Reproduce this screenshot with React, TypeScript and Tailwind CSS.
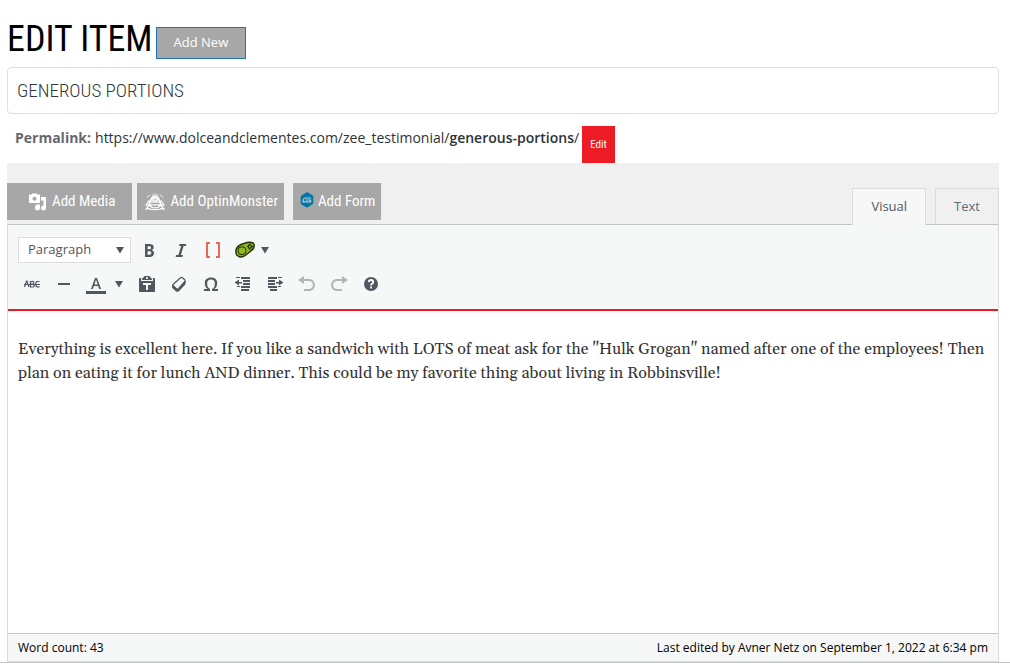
import React, { useState } from 'react';

const condensed = 'font-["Roboto_Condensed","Liberation_Sans_Narrow",Roboto,sans-serif]';

interface ToolButtonProps {
  label: string;
  className?: string;
  children: React.ReactNode;
}

const ToolButton: React.FC<ToolButtonProps> = ({ label, className = 'w-8', children }) => (
  <button
    type="button"
    aria-label={label}
    title={label}
    className={`flex h-8 items-center justify-center text-[#50575e] ${className}`}
  >
    {children}
  </button>
);

const Caret = () => (
  <svg className="h-2 w-2" viewBox="0 0 8 8" fill="currentColor">
    <path d="M0 1h8L4 7.500z" />
  </svg>
);

const MediaIcon = () => (
  <svg className="h-5 w-5" viewBox="0 0 20 20" fill="currentColor">
    <path d="M12 9.500V3.500c0-.55-.45-1-1-1H9.500L8.500 1.500h-4l-1 1H2c-.55 0-1 .45-1 1v6.500c0 .55.45 1 1 1h9c.55 0 1-.45 1-1zM6.500 4.800c1.100 0 2 .9 2 2s-.9 2-2 2-2-.9-2-2 .9-2 2-2zM13 5h5v11c0 1.400-1.100 2.500-2.500 2.500S13 17.400 13 16s1-2.500 2.500-2.500V8.500H13V5zM8.500 12.500H12V16c0 1.400-1.100 2.500-2.500 2.500S7 17.400 7 16s.5-3.500 1.500-3.500z" />
  </svg>
);

const MonsterIcon = () => (
  <svg className="h-5 w-5" viewBox="0 0 20 20" fill="none" stroke="currentColor" strokeWidth="1">
    <path d="M7 4Q7.500 1.800 10 1.800T13 4M2 6q0-2.500 3.500-3M18 6q0-2.500-3.500-3" strokeOpacity=".6" />
    <path d="M4 13Q6 4 10 4t6 9z" fill="currentColor" fillOpacity=".65" strokeWidth="1.600" />
    <path d="M4 8.500 1 13l3 .5L1 17l4-.5M16 8.500l3 4.500-3 .5 3 3.500-4-.5M4 17q6 1.500 12 0" strokeWidth="1.200" />
    <path d="M4.500 12.500h11V14q-2 2-5.500 2t-5.500-2z" fill="currentColor" fillOpacity=".6" />
    <path d="M5.500 11.800h9M7 14.200h6" stroke="#8f8f8f" />
    <circle cx="10" cy="7.800" r="1.800" fill="white" />
    <circle cx="10" cy="7.800" r=".8" fill="#8a8a8a" stroke="none" />
  </svg>
);

const FormIcon = () => (
  <svg className="mb-1 h-4 w-4" viewBox="0 0 16 16">
    <path d="M7 .5q1-.6 2 0l4.500 2.700q.8.500.8 1.500v6q0 1-.8 1.500L9 15.300q-1 .6-2 0l-4.500-2.900q-.8-.5-.8-1.500v-6q0-1 .8-1.500z" fill="#0077a8" />
    <path d="M12 6H6.200Q4.800 6 4.500 7.500L4 9.800h7.600V8H6.500" fill="none" stroke="#b9c9d0" strokeWidth="1.200" />
  </svg>
);

const BoldIcon = () => (
  <svg className="h-5 w-5" viewBox="0 0 20 20" fill="currentColor">
    <path d="M6 4v13h4.540c1.370 0 2.460-.33 3.260-1 .8-.66 1.200-1.580 1.200-2.770 0-.84-.17-1.510-.51-2.010s-.9-.85-1.670-1.030v-.09c.57-.1 1.020-.4 1.360-.9s.51-1.130.51-1.910c0-1.140-.39-1.980-1.170-2.500C12.750 4.260 11.500 4 9.780 4H6zm2.570 5.150V6.260h1.360c.73 0 1.270.11 1.610.32.34.22.51.58.51 1.070 0 .54-.16.92-.47 1.150s-.82.35-1.510.35h-1.500zm0 2.190h1.600c1.440 0 2.160.53 2.160 1.610 0 .6-.17 1.050-.51 1.340s-.86.43-1.570.43H8.570v-3.380z" />
  </svg>
);

const ItalicIcon = () => (
  <svg className="h-5 w-5" viewBox="0 0 20 20" fill="currentColor">
    <path d="M14.780 6h-2.130l-2.800 9h2.120l-.62 2H4.600l.62-2h2.140l2.800-9H8.030l.62-2h6.750z" />
  </svg>
);

const BracketsIcon = () => (
  <svg className="h-5 w-5" viewBox="0 0 20 20" fill="none" stroke="#e8685c" strokeWidth="2">
    <path d="M7 3H4v14h3M13 3h3v14h-3" />
  </svg>
);

const GreenIcon = () => (
  <svg className="h-5 w-5" viewBox="0 0 20 20">
    <path d="M.8 11.500Q.8 7 6 4.500l6-2q6.500-1 7.200 2.300.3 3.500-3 6l-6 4.700q-3 2-6 1.200Q.8 15.700.8 11.500z" fill="#8fb51b" stroke="#203008" strokeWidth="1.400" />
    <circle cx="7" cy="10.700" r="4" fill="#91b91c" stroke="#203008" strokeWidth="1" />
    <circle cx="14.800" cy="6.500" r="1.600" fill="#b5d45a" stroke="#203008" strokeWidth="1.300" />
    <path d="M14.800 3.500v2M14.800 8v2M12 6.500h2M16 6.500h2" stroke="#203008" strokeWidth="1" />
  </svg>
);

const StrikeIcon = () => (
  <svg className="h-5 w-5" viewBox="0 0 20 20" fill="none" stroke="currentColor" strokeWidth="1.200">
    <path d="M2.500 13l2-6h.5l2 6M8.500 7v6h2q1.700 0 1.700-1.600T10.500 10H8.500h1.800q1.500 0 1.500-1.500T10.300 7.500H8.500M17.500 7.500h-2q-1.700 0-1.700 2.700t1.700 2.700h2M2 10.500h16" />
  </svg>
);

const ColorIcon = () => (
  <svg className="h-5 w-5" viewBox="0 0 20 20" fill="currentColor">
    <path d="M13.230 15h1.900L11 4H9L5 15h1.880l1.070-3h4.180zm-1.530-4.540H8.510L10 5.600z" />
    <path d="M0 17h20v3H0z" />
  </svg>
);

const PasteIcon = () => (
  <svg className="h-5 w-5" viewBox="0 0 20 20" fill="currentColor">
    <path d="M12.380 2 15 5v1H5V5l2.640-3h4.740zM10 5c.55 0 1-.44 1-1 0-.55-.45-1-1-1s-1 .45-1 1c0 .56.45 1 1 1zm5.450-1H17c.55 0 1 .45 1 1v12c0 .56-.45 1-1 1H3c-.55 0-1-.44-1-1V5c0-.55.45-1 1-1h1.550L4 4.630V7h12V4.630zM14 11V9H6v2h3v5h2v-5h3z" />
  </svg>
);

const EraserIcon = () => (
  <svg className="h-5 w-5" viewBox="0 0 20 20" fill="none" stroke="currentColor" strokeWidth="1.200" strokeLinejoin="round">
    <path d="M11.500 3.800q1-1 2 0l2.200 2q1 1 0 2L9.500 15q-1 1-2 0l-3.200-2.800q-1-1 0-2z" />
    <path d="M3.700 11.500v2L7.500 17q1 .6 2-.2l6.500-7V7.500L9.500 15q-1 1-2 0z" fill="currentColor" />
  </svg>
);

const OmegaIcon = () => (
  <svg className="h-5 w-5" viewBox="0 0 20 20" fill="currentColor">
    <path d="M10 5.400c1.270 0 2.240.36 2.910 1.080.66.710 1 1.760 1 3.130 0 1.280-.23 2.370-.69 3.270-.47.890-1.270 1.520-2.220 2.120v2h6v-2h-3.690c.92-.64 1.620-1.340 2.120-2.340.49-1.010.74-2.130.74-3.350 0-1.780-.55-3.190-1.650-4.220S11.920 3.540 10 3.540s-3.430.53-4.520 1.570c-1.100 1.040-1.650 2.440-1.650 4.200 0 1.210.24 2.310.73 3.330.48 1.010 1.190 1.710 2.100 2.360H3v2h6v-2c-.98-.64-1.800-1.280-2.240-2.170-.45-.890-.67-1.960-.67-3.220 0-1.370.33-2.410 1-3.130C7.750 5.760 8.720 5.400 10 5.400z" />
  </svg>
);

const OutdentIcon = () => (
  <svg className="h-5 w-5" viewBox="0 0 20 20" fill="currentColor">
    <path d="M7 4V3H3v1h4zM17 5H8V3h9v2zm0 3h-7V6h7v2zM9 8H6V5.500L1.500 8.500l4.500 3V9.500h3zM17 11h-7V9h7v2zm0 3H8v-2h9v2zM7 13v-1H4v1h3zm9 4H8v-2h8v2z" />
  </svg>
);

const IndentIcon = () => (
  <svg className="h-5 w-5" viewBox="0 0 20 20" fill="currentColor">
    <path d="M3 5V3h9v2H3zm10-1V3h4v1h-4zM10 8H3V6h7v2zm8.500.5-4.500 3V9.500h-3V8h3V5.500zM10 11H3V9h7v2zm2 3H3v-2h9v2zm4-1h-3v-1h3v1zm-4 4H5v-2h7v2z" />
  </svg>
);

const UndoIcon = () => (
  <svg className="h-5 w-5" viewBox="0 0 20 20" fill="currentColor">
    <path d="M12 5H7V2L1 6l6 4V7h5c2.200 0 4 1.800 4 4s-1.800 4-4 4H7v2h5c3.300 0 6-2.700 6-6s-2.700-6-6-6z" />
  </svg>
);

const RedoIcon = () => (
  <svg className="h-5 w-5" viewBox="0 0 20 20" fill="currentColor">
    <path d="M8 5h5V2l6 4-6 4V7H8c-2.200 0-4 1.800-4 4s1.800 4 4 4h5v2H8c-3.300 0-6-2.700-6-6s2.700-6 6-6z" />
  </svg>
);

const HelpIcon = () => (
  <svg className="h-5 w-5" viewBox="0 0 20 20" fill="currentColor">
    <circle cx="10" cy="10" r="7" />
    <path d="M7.700 8.200Q7.900 6 10 6t2.200 1.900Q12.200 9 11 9.700q-1 .6-1 1.700M10 12.500v2" fill="none" stroke="white" strokeWidth="1.800" />
  </svg>
);

export default function App() {
  const [title, setTitle] = useState('GENEROUS PORTIONS');
  const [tab, setTab] = useState<'visual' | 'text'>('visual');
  const [content, setContent] = useState(
    'Everything is excellent here. If you like a sandwich with LOTS of meat ask for the "Hulk Grogan" named after one of the employees! Then plan on eating it for lunch AND dinner. This could be my favorite thing about living in Robbinsville!'
  );

  const mediaButton = `flex h-[37px] items-center bg-[#a7a7a7] text-[15px] text-white ${condensed}`;

  return (
    <div className='flex min-h-screen flex-col bg-white pb-[2px] font-["Open_Sans",sans-serif] text-[13px]'>
      <main className="flex flex-1 flex-col border-b border-[#c3c4c7] pr-[11px] pl-[7px]">
        <header className="flex h-[67px] items-end gap-[3px] pb-2">
          <h1 className={`text-4xl leading-[40px] text-black ${condensed}`}>EDIT ITEM</h1>
          <a
            href="#new"
            className="flex h-8 items-center border border-[#2271b1] bg-[#a7a7a7] px-[17px] text-white"
          >
            Add New
          </a>
        </header>

        <input
          type="text"
          aria-label="Title"
          value={title}
          onChange={(e) => setTitle(e.target.value)}
          className={`h-[47px] w-full rounded border border-[#dfdfdf] px-[9px] text-[19px] font-light text-[#32373c] ${condensed}`}
        />

        <div className="flex h-[49px] items-end gap-[3px] pl-2 text-sm text-[#2c3338]">
          <p className="flex h-[37px] gap-1 leading-6">
            <strong className="text-[#646970]">Permalink:</strong>
            <a href="#permalink">
              https://www.dolceandclementes.com/zee_testimonial/<span className="font-semibold">generous-portions</span>/
            </a>
          </p>
          <button type="button" className={`h-[37px] bg-[#ee1c25] px-2 text-[11px] text-white ${condensed}`}>
            Edit
          </button>
        </div>

        <div className="flex h-[61px] items-end justify-between bg-[#f0f0f1]">
          <div className="flex pb-1">
            <button type="button" className={`${mediaButton} mr-[5px] gap-1 pr-[17px] pl-[21px]`}>
              <MediaIcon />
              Add Media
            </button>
            <button type="button" className={`${mediaButton} mr-[9px] gap-[5px] pr-[6px] pl-2`}>
              <MonsterIcon />
              Add OptinMonster
            </button>
            <button type="button" className={`${mediaButton} gap-[3px] px-[6px]`}>
              <FormIcon />
              Add Form
            </button>
          </div>
          <div className="flex gap-[9px]" role="tablist">
            <button
              type="button"
              role="tab"
              aria-selected={tab === 'visual'}
              onClick={() => setTab('visual')}
              className={`relative -mb-px h-[37px] border border-b-0 border-[#dcdcde] px-[18px] text-[#50575e] ${tab === 'visual' ? 'bg-[#f6f7f7]' : 'bg-[#f0f0f1]'}`}
            >
              Visual
            </button>
            <button
              type="button"
              role="tab"
              aria-selected={tab === 'text'}
              onClick={() => setTab('text')}
              className={`h-9 border border-b-0 border-[#dcdcde] px-[18px] text-[#646970] ${tab === 'text' ? 'bg-[#f6f7f7]' : 'bg-[#f0f0f1]'}`}
            >
              Text
            </button>
          </div>
        </div>

        <section className="flex flex-1 flex-col border border-[#dcdcde] border-t-[#c3c4c7]">
          <div className="border-b-2 border-[#ee1c25] bg-[#f6f7f7] px-2 py-2" role="toolbar">
            <div className="flex h-[34px] items-center">
              <div className="relative mx-[2px] w-[113px] text-[#50575e]">
                <select
                  aria-label="Format"
                  className="block h-[26px] w-full appearance-none border border-[#dcdcde] bg-white pl-[9px]"
                >
                  <option>Paragraph</option>
                  <option>Heading 1</option>
                  <option>Heading 2</option>
                  <option>Preformatted</option>
                </select>
                <span className="pointer-events-none absolute top-[9px] right-[7px]">
                  <Caret />
                </span>
              </div>
              <ToolButton label="Bold"><BoldIcon /></ToolButton>
              <ToolButton label="Italic"><ItalicIcon /></ToolButton>
              <ToolButton label="Shortcodes"><BracketsIcon /></ToolButton>
              <ToolButton label="Insert"><GreenIcon /></ToolButton>
              <ToolButton label="Insert options" className="w-2"><Caret /></ToolButton>
            </div>
            <div className="flex h-[34px] items-center">
              <ToolButton label="Strikethrough"><StrikeIcon /></ToolButton>
              <ToolButton label="Horizontal line">
                <svg className="h-5 w-5" viewBox="0 0 20 20" fill="currentColor">
                  <path d="M4 9h12v2H4z" />
                </svg>
              </ToolButton>
              <ToolButton label="Text color"><ColorIcon /></ToolButton>
              <ToolButton label="Pick color" className="w-[19px] pr-[6px]"><Caret /></ToolButton>
              <ToolButton label="Paste as text"><PasteIcon /></ToolButton>
              <ToolButton label="Clear formatting"><EraserIcon /></ToolButton>
              <ToolButton label="Special character"><OmegaIcon /></ToolButton>
              <ToolButton label="Decrease indent"><OutdentIcon /></ToolButton>
              <ToolButton label="Increase indent"><IndentIcon /></ToolButton>
              <ToolButton label="Undo" className="w-8 opacity-40"><UndoIcon /></ToolButton>
              <ToolButton label="Redo" className="w-8 opacity-40"><RedoIcon /></ToolButton>
              <ToolButton label="Keyboard shortcuts"><HelpIcon /></ToolButton>
            </div>
          </div>

          <textarea
            aria-label="Content"
            value={content}
            onChange={(e) => setContent(e.target.value)}
            className='block w-full flex-1 resize-none bg-white px-[10px] pt-[26px] font-[Georgia,Gelasio,"Liberation_Serif",serif] text-base leading-6 text-[#333333]'
          />

          <footer className="flex h-7 items-center justify-between border-t border-[#c3c4c7] bg-[#f6f7f7] px-[10px] text-xs text-black">
            <span>Word count: 43</span>
            <span>Last edited by Avner Netz on September 1, 2022 at 6:34 pm</span>
          </footer>
        </section>
      </main>
    </div>
  );
}
